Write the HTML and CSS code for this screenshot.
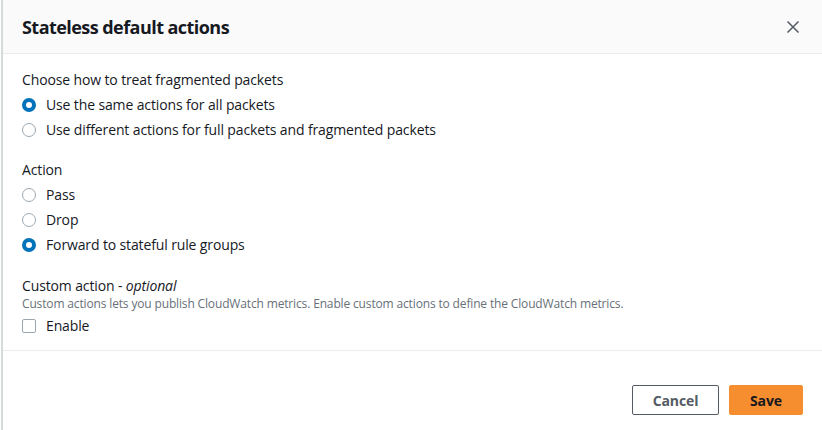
FILE: index.html
```html
<!DOCTYPE html>
<html>
<head>
<meta charset="utf-8">
<link rel="stylesheet" href="styles.css">
</head>
<body>
<div class="modal">
  <div class="header">
    <h2 class="title">Stateless default actions</h2>
    <button class="close" aria-label="Close">
      <svg width="14" height="14" viewBox="0 0 14 14"><path d="M1.5 1.5L12.5 12.5M12.5 1.5L1.5 12.5" stroke="#545b64" stroke-width="1.5" fill="none"/></svg>
    </button>
  </div>
  <div class="body">
    <div class="field">
      <div class="label">Choose how to treat fragmented packets</div>
      <div class="option"><span class="radio checked"></span><span>Use the same actions for all packets</span></div>
      <div class="option"><span class="radio"></span><span>Use different actions for full packets and fragmented packets</span></div>
    </div>
    <div class="field">
      <div class="label">Action</div>
      <div class="option"><span class="radio"></span><span>Pass</span></div>
      <div class="option"><span class="radio"></span><span>Drop</span></div>
      <div class="option"><span class="radio checked"></span><span>Forward to stateful rule groups</span></div>
    </div>
    <div class="field custom">
      <div class="label">Custom action - <i>optional</i></div>
      <div class="desc">Custom actions lets you publish CloudWatch metrics. Enable custom actions to define the CloudWatch metrics.</div>
      <div class="option"><span class="checkbox"></span><span>Enable</span></div>
    </div>
  </div>
  <div class="footer">
    <button class="btn cancel">Cancel</button>
    <button class="btn save">Save</button>
  </div>
</div>
</body>
</html>
```
FILE: styles.css
```css
html, body { margin: 0; padding: 0; background: #fff; }
body { font-family: "Open Sans", "Liberation Sans", sans-serif; color: #16191f; }
.modal {
  width: 822px; height: 430px; box-sizing: border-box;
  border-left: 2px solid #d5dbdb;
  margin-left: 1px;
  display: flex; flex-direction: column;
}
.header {
  height: 54px; box-sizing: border-box;
  background: #fafafa; border-bottom: 1px solid #eaeded;
  display: flex; align-items: center; justify-content: space-between;
  padding: 0 23px 0 19px;
}
.title { margin: 0; font-size: 18px; font-weight: 700; letter-spacing: -0.55px; }
.close { background: none; border: 0; padding: 0; width: 14px; height: 14px; display: flex; align-items: center; justify-content: center; }
.body { padding: 16px 19px 12px; border-bottom: 1px solid #eaeded; display: flex; flex-direction: column; gap: 18px; font-size: 14px; letter-spacing: -0.13px; }
.custom { margin-top: 1px; }
.label { line-height: 20px; height: 20px; margin-bottom: 2px; }
.option { display: flex; align-items: center; height: 25px; line-height: 20px; }
.radio { width: 14px; height: 14px; border: 1px solid #9ba7b0; border-radius: 50%; margin: 0 10px 0 0; box-sizing: border-box; flex: none; background: #fff; }
.radio.checked { border: 4.5px solid #0073bb; }
.checkbox { width: 14px; height: 14px; box-sizing: border-box; border: 1px solid #9ba7b0; border-radius: 2px; margin: 0 10px 0 0; flex: none; }
.desc { font-size: 12px; color: #687078; line-height: 16px; margin-top: -2px; letter-spacing: -0.15px; }
.custom .option { margin-top: 1px; }
.footer { flex: 1; display: flex; justify-content: flex-end; align-items: flex-start; gap: 10px; padding: 34px 20px 0 0; }
.btn { font-family: inherit; font-size: 14px; font-weight: 700; height: 30px; border-radius: 2px; padding: 0; letter-spacing: -0.1px; }
.cancel { background: #fff; border: 1px solid #545b64; color: #545b64; width: 87px; }
.save { background: #f68d2e; border: 1px solid #f68d2e; color: #16191f; width: 74px; }
```
